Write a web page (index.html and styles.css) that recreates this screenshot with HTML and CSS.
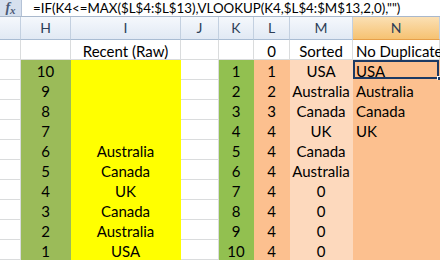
FILE: index.html
```html
<!DOCTYPE html>
<html>
<head>
<meta charset="utf-8">
<link rel="stylesheet" href="styles.css">
</head>
<body>
<div class="app">
  <div class="fbar">
    <div class="fx"><i>f</i><span class="x">x</span></div>
    <div class="formula">=IF(K4&lt;=MAX($L$4:$L$13),VLOOKUP(K4,$L$4:$M$13,2,0),"")</div>
  </div>
  <div class="sheet">
    <div class="ch"></div><div class="ch">H</div><div class="ch">I</div><div class="ch">J</div><div class="ch">K</div><div class="ch">L</div><div class="ch">M</div><div class="ch sel">N</div>

    <div class="c w"></div><div class="c w"></div><div class="c w">Recent (Raw)</div><div class="c w"></div><div class="c w"></div><div class="c w">0</div><div class="c w">Sorted</div><div class="c w l">No Duplicates</div>

    <div class="c w"></div><div class="c g">10</div><div class="c y"></div><div class="c w"></div><div class="c g2">1</div><div class="c o">1</div><div class="c p">USA</div><div class="c o l active">USA<span class="handle"></span></div>
    <div class="c w"></div><div class="c g">9</div><div class="c y"></div><div class="c w"></div><div class="c g2">2</div><div class="c o">2</div><div class="c p">Australia</div><div class="c o l">Australia</div>
    <div class="c w"></div><div class="c g">8</div><div class="c y"></div><div class="c w"></div><div class="c g2">3</div><div class="c o">3</div><div class="c p">Canada</div><div class="c o l">Canada</div>
    <div class="c w"></div><div class="c g">7</div><div class="c y"></div><div class="c w"></div><div class="c g2">4</div><div class="c o">4</div><div class="c p">UK</div><div class="c o l">UK</div>
    <div class="c w"></div><div class="c g">6</div><div class="c y">Australia</div><div class="c w"></div><div class="c g2">5</div><div class="c o">4</div><div class="c p">Canada</div><div class="c o l"></div>
    <div class="c w"></div><div class="c g">5</div><div class="c y">Canada</div><div class="c w"></div><div class="c g2">6</div><div class="c o">4</div><div class="c p">Australia</div><div class="c o l"></div>
    <div class="c w"></div><div class="c g">4</div><div class="c y">UK</div><div class="c w"></div><div class="c g2">7</div><div class="c o">4</div><div class="c p">0</div><div class="c o l"></div>
    <div class="c w"></div><div class="c g">3</div><div class="c y">Canada</div><div class="c w"></div><div class="c g2">8</div><div class="c o">4</div><div class="c p">0</div><div class="c o l"></div>
    <div class="c w"></div><div class="c g">2</div><div class="c y">Australia</div><div class="c w"></div><div class="c g2">9</div><div class="c o">4</div><div class="c p">0</div><div class="c o l"></div>
    <div class="c w"></div><div class="c g">1</div><div class="c y">USA</div><div class="c w"></div><div class="c g2">10</div><div class="c o">4</div><div class="c p">0</div><div class="c o l"></div>
  </div>
</div>
</body>
</html>
```
FILE: styles.css
```css
* { box-sizing: border-box; }
html, body { margin: 0; padding: 0; background: #fff; }
body { width: 440px; height: 262px; overflow: hidden; font-family: Lato, "Open Sans", sans-serif; font-size: 15px; color: #000; }
.app { width: 440px; }
.fbar { display: flex; height: 17px; border-bottom: 1px solid #a9b8cc; }
.fx { width: 22px; background: #d6e0ee; border-right: 1px solid #b4c2d6; display: flex; align-items: center; justify-content: center; font-family: "Liberation Serif", serif; font-size: 14px; color: #4a5a76; font-weight: bold; }
.fx i { font-style: italic; }
.fx .x { font-style: italic; font-size: 11px; margin-top: 3px; }
.formula { padding-left: 11px; line-height: 16px; white-space: nowrap; font-size: 13.3px; }
.sheet { display: grid; grid-template-columns: 21px 50px 110px 38px 35px 36px 63px 87px; grid-template-rows: 23px repeat(11, 20px); }
.ch { background: linear-gradient(#f5f8fc, #e1e9f4); border-right: 1px solid #c3d0e0; border-bottom: 1px solid #a9bcd3; text-align: center; line-height: 22px; color: #2d3e57; font-size: 14px; }
.ch.sel { background: linear-gradient(#fbe0b4, #f6c272); border-bottom-color: #e6a04a; }
.c { line-height: 20px; padding-top: 1px; text-align: center; white-space: nowrap; overflow: visible; position: relative; border-right: 1px solid transparent; border-bottom: 1px solid transparent; }
.c.l { text-align: left; padding-left: 3px; }
.w { border-color: #dadcdd; background: #fff; }
.g { background: #9bbb59; }
.g2 { background: #92c050; }
.y { background: #ffff00; }
.o { background: #fcc08f; }
.p { background: #fdd9bd; }
.active { box-shadow: inset 0 0 0 2px #1c3a63; }
.handle { position: absolute; right: -3px; bottom: -2px; width: 5px; height: 5px; background: #1c3a63; border: 1px solid #fff; }
```
